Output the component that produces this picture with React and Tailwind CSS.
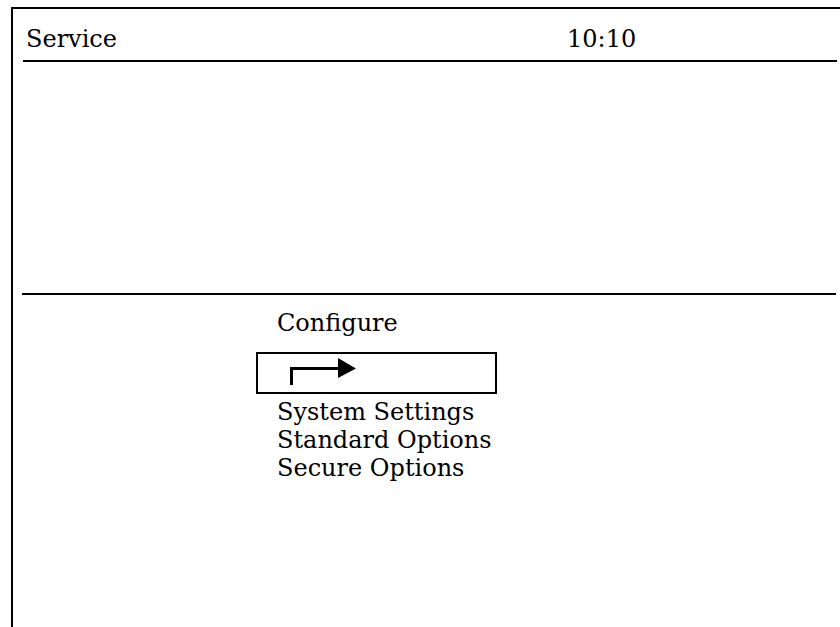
export default function App() {
  const font = { fontFamily: '"DejaVu Serif", serif' };
  return (
    <div className="w-[840px] h-[627px] bg-white overflow-hidden text-black" style={font}>
      <div className="ml-[11px] mt-[7px] h-[620px] border-l-2 border-t-2 border-black">
        <div className="ml-[10px] mr-[3px] h-[53px] border-b-2 border-black flex items-start pt-[16px] pl-[3px] text-[24px] leading-[28px]">
          <span className="w-[541px]">Service</span>
          <span>10:10</span>
        </div>
        <div className="h-[231px]" />
        <div className="ml-[9px] mr-[4px] border-t-2 border-black" />
        <div className="pt-[14px] text-[24px] leading-[28px]">
          <div className="ml-[264px]">Configure</div>
          <div className="ml-[243px] mt-[15px] w-[241px] h-[42px] border-2 border-black flex items-start pl-[30px] pt-[2px]">
            <svg width="70" height="30" viewBox="0 0 70 30">
              <rect x="2" y="11" width="3" height="18" fill="black" />
              <rect x="2" y="11" width="50" height="3" fill="black" />
              <polygon points="50,2 68,12.5 50,22" fill="black" />
            </svg>
          </div>
          <div className="ml-[264px] mt-[4px]">
            <div>System Settings</div>
            <div>Standard Options</div>
            <div>Secure Options</div>
          </div>
        </div>
      </div>
    </div>
  );
}
